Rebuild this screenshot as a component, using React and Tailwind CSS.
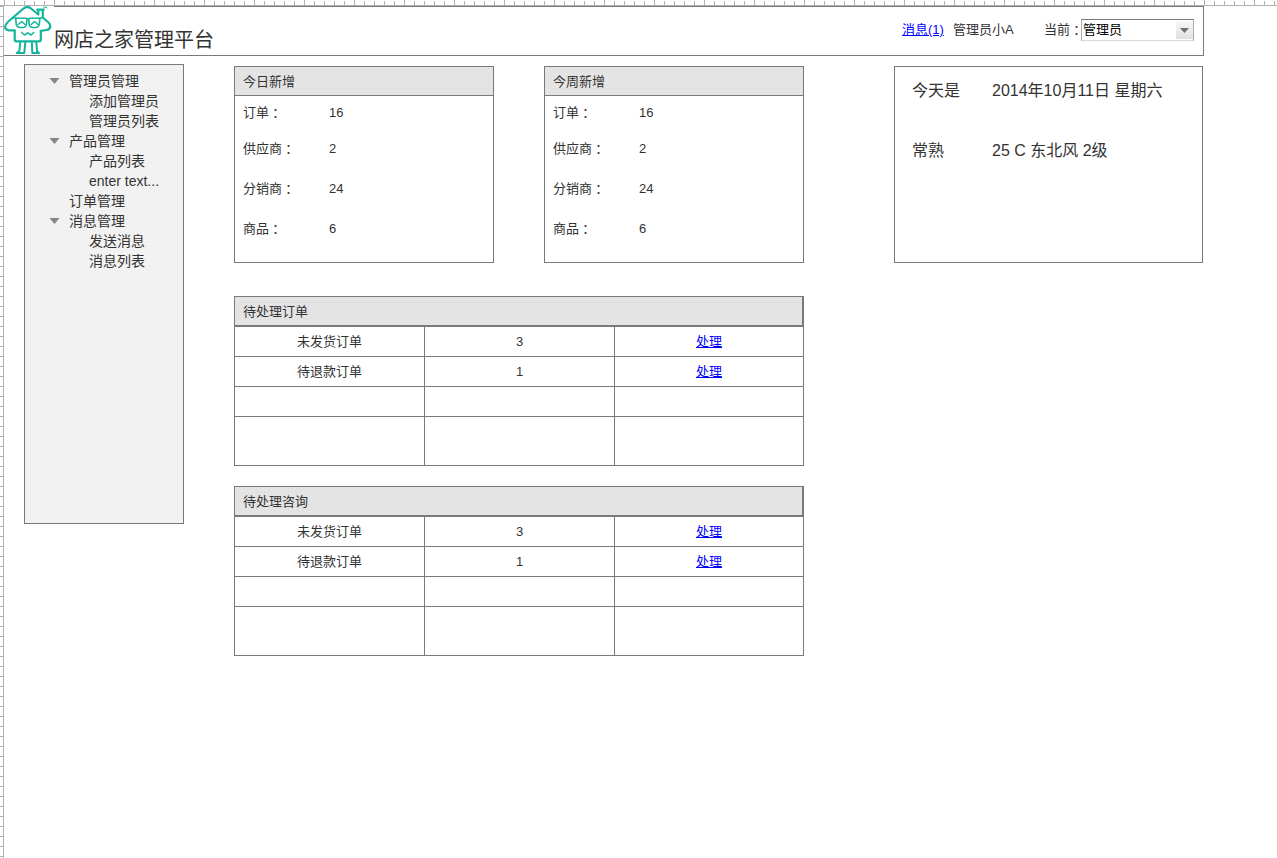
const TREE = [
  { label: '管理员管理', open: true, children: ['添加管理员', '管理员列表'] },
  { label: '产品管理', open: true, children: ['产品列表', 'enter text...'] },
  { label: '订单管理', open: false, children: [] },
  { label: '消息管理', open: true, children: ['发送消息', '消息列表'] },
];

const STATS = [
  { label: '订单', value: '16', h: 'h-9' },
  { label: '供应商', value: '2', h: 'h-10' },
  { label: '分销商', value: '24', h: 'h-10' },
  { label: '商品', value: '6', h: 'h-10' },
];

const ROWS = [
  { name: '未发货订单', count: '3', action: '处理', h: 'h-[30px]' },
  { name: '待退款订单', count: '1', action: '处理', h: 'h-[30px]' },
  { name: '', count: '', action: '', h: 'h-[30px]' },
  { name: '', count: '', action: '', h: 'h-[49px]' },
];

function Colon() {
  return <span className="inline-block translate-y-px font-['Noto_Sans_CJK_TC',sans-serif] leading-none">：</span>;
}

function HouseLogo() {
  return (
    <svg viewBox="0 0 50 49" className="block h-[49px] w-[50px] bg-white" fill="none" stroke="#12b59b" strokeWidth="2.200" strokeLinecap="round" strokeLinejoin="round">
      <path d="M10.700 25 V33.500 Q10.700 35.300 12.500 35.300 H35 Q36.800 35.300 36.800 33.500 V25" />
      <path d="M10.700 24.300 H5 Q0 23.500 1.600 19 Q3 16.500 5.500 14.500 L19.500 2.500 Q23.300 -0.500 27 2.500 L34.300 8.500 V4.500 M38.800 4.500 V11.500 L44.500 16.500 Q46.500 18.500 46.300 20.500 Q45.800 23.500 42.500 24 L36.800 24.800" />
      <path d="M33.300 3.700 H39.700" />
      <path d="M12.500 12.200 H22 Q23 12.200 22.900 13.500 L22.500 18 Q22 21.500 18.500 21.500 H16.500 Q12.500 21.500 12.200 18 L11.800 13 Z" strokeWidth="1.600" />
      <path d="M25.500 12.200 H35 Q36 12.200 35.800 13.500 L35.300 18 Q34.800 21.500 31.200 21.500 H29.200 Q25.500 21.500 25.100 18 L24.700 13 Z" strokeWidth="1.600" />
      <path d="M9.500 12 H12 M22.500 12.700 H25 M35.500 12.200 L38 12" strokeWidth="1.600" />
      <path d="M14.300 18.500 L17.700 15.500 L21 18.500 M27.200 18.500 L30.600 15.500 L34 18.500" strokeWidth="1.500" />
      <path d="M17.800 26.500 L20.500 29 L23.700 26.800 L27 29 L29.700 26.500" strokeWidth="1.600" />
      <path d="M16.300 36 L15.300 45 L12.700 47 H20.300 L21.300 36 M27.800 36 L28.300 47 H35 L33 45 L32.300 36" strokeWidth="2" />
      <path d="M39.500 1 L41 2 L42 0.700 L43 2" strokeWidth="0.900" />
    </svg>
  );
}

function Header() {
  return (
    <header className="flex h-[50px] w-[1200px] border border-l-0 border-[#797979] bg-white">
      <div className="-mt-px h-[49px] w-[50px] shrink-0">
        <HouseLogo />
      </div>
      <h1 className="mt-[18px] w-[848px] text-[20px] leading-[30px]">网店之家管理平台</h1>
      <div className="mt-3 flex h-[22px] items-center leading-[22px]">
        <a href="#messages" className="w-[51px] text-[#0000ff] underline">消息(1)</a>
        <span className="w-[91px]">管理员小A</span>
        <span className="w-[37px] whitespace-nowrap">当前<Colon /></span>
        <button type="button" className="flex h-[22px] w-[113px] items-center justify-between border border-[#b0b0b0] border-t-[#797979] border-b-[#d8d8d8] bg-white pl-px text-black">
          <span>管理员</span>
          <span className="flex h-[18px] w-[17px] items-center justify-center bg-linear-to-b from-[#f8f8f8] to-[#e0e0e0]">
            <svg width="9" height="5" viewBox="0 0 9 5"><path d="M0 0H9L4.500 5Z" fill="#707070" /></svg>
          </span>
        </button>
      </div>
    </header>
  );
}

function Sidebar() {
  return (
    <nav className="h-[460px] w-40 shrink-0 border border-[#797979] bg-[#f2f2f2] bg-[radial-gradient(circle_at_1.5px_1.5px,#ececec_0.5px,transparent_0.6px)] bg-size-[4px_4px] pt-1.5 pl-6 text-[14px] leading-5 whitespace-nowrap">
      {TREE.map((node) => (
        <div key={node.label}>
          <div className="flex h-5 items-center">
            <span className="w-5 shrink-0">
              {node.open && (
                <svg width="11" height="6" viewBox="0 0 11 6"><path d="M0.500 0H10.500L5.500 6Z" fill="#868686" /></svg>
              )}
            </span>
            {node.label}
          </div>
          {node.children.map((child) => (
            <div key={child} className="h-5 pl-10">{child}</div>
          ))}
        </div>
      ))}
    </nav>
  );
}

function PanelTitle({ children, className = '' }) {
  return (
    <h2 className={'h-[29px] border-b border-[#797979] bg-[#e4e4e4] bg-[radial-gradient(circle_at_1.5px_1.5px,#dddddd_0.5px,transparent_0.6px)] bg-size-[4px_4px] pl-2 leading-[30px] ' + className}>
      {children}
    </h2>
  );
}

function StatCard({ title }) {
  return (
    <section className="h-[197px] w-[260px] shrink-0 border border-[#797979] bg-white">
      <PanelTitle>{title}</PanelTitle>
      <dl className="pt-1.5 pl-2">
        {STATS.map((s) => (
          <div key={s.label} className={'flex ' + s.h}>
            <dt className="w-[86px] leading-[21px]">{s.label}<Colon /></dt>
            <dd className="leading-[22px]">{s.value}</dd>
          </div>
        ))}
      </dl>
    </section>
  );
}

function TaskTable({ title }) {
  return (
    <section className="h-[170px] w-[570px] border border-[#797979] bg-white">
      <PanelTitle className="border-r">{title}</PanelTitle>
      {ROWS.map((r, i) => (
        <div key={i} className={'grid grid-cols-[190px_190px_188px] border-t border-[#797979] text-center leading-[29px] ' + r.h}>
          <span className="border-r border-[#797979]">{r.name}</span>
          <span className="border-r border-[#797979]">{r.count}</span>
          <span>{r.action && <a href="#handle" className="text-[#0000ff] underline">{r.action}</a>}</span>
        </div>
      ))}
    </section>
  );
}

function InfoCard() {
  return (
    <aside className="mt-0.5 ml-[90px] h-[197px] w-[309px] border border-[#797979] bg-white pt-3.5 pl-[17px] text-[16px] leading-5">
      <p className="flex h-[60px]"><span className="w-20">今天是</span><span>2014年10月11日 星期六</span></p>
      <p className="flex"><span className="w-20">常熟</span><span>25 C 东北风 2级</span></p>
    </aside>
  );
}

export default function App() {
  return (
    <div className="flex h-[858px] w-[1277px] flex-col overflow-hidden bg-white font-['Liberation_Sans','Noto_Sans_CJK_SC',sans-serif] text-[13px] text-[#333333]">
      <div className="h-1.5 shrink-0 border-b border-[#b0b0b0] pl-1">
        <div className="h-full bg-[repeating-linear-gradient(90deg,#b0b0b0_0_1px,transparent_1px_50px)]">
          <div className="h-full pt-px">
            <div className="h-full bg-[repeating-linear-gradient(90deg,#b0b0b0_0_1px,transparent_1px_10px)]" />
          </div>
        </div>
      </div>
      <div className="flex min-h-0 flex-1">
        <div className="w-1 shrink-0 border-r border-[#b0b0b0] bg-[repeating-linear-gradient(180deg,#b0b0b0_0_1px,transparent_1px_10px)]" />
        <div className="w-[1273px]">
          <Header />
          <div className="flex pt-2 pl-5">
            <Sidebar />
            <main className="ml-[50px] w-[570px] shrink-0 pt-0.5">
              <div className="flex justify-between">
                <StatCard title="今日新增" />
                <StatCard title="今周新增" />
              </div>
              <div className="mt-[33px] flex flex-col gap-5">
                <TaskTable title="待处理订单" />
                <TaskTable title="待处理咨询" />
              </div>
            </main>
            <InfoCard />
          </div>
        </div>
      </div>
    </div>
  );
}
